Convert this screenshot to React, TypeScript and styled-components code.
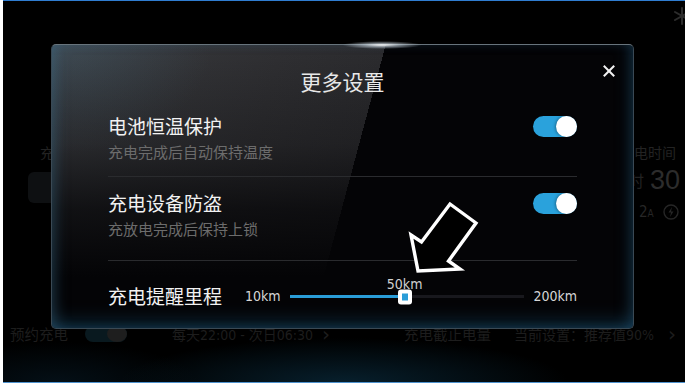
import styled, { createGlobalStyle } from "styled-components"

const CJK = `"Noto Sans CJK SC", "Noto Sans", sans-serif`
const NUM = `"DejaVu Sans Condensed", "Liberation Sans Narrow", "Noto Sans CJK SC", sans-serif`

const GlobalStyle = createGlobalStyle`
  html, body {
    margin: 0;
    padding: 0;
    background: #fff;
  }
  body {
    font-family: ${CJK};
  }
  * {
    box-sizing: border-box;
  }
`

const Toggle = ({ on, dim }: { on: boolean; dim?: boolean }) => (
  <Track $on={on} $dim={dim}>
    <Knob $on={on} $dim={dim} />
  </Track>
)

const Setting = ({
  title,
  note,
  top,
  bottom,
}: {
  title: string
  note: string
  top: number
  bottom: number
}) => (
  <Item $top={top} $bottom={bottom}>
    <ItemHead>
      <ItemTitle>{title}</ItemTitle>
      <Toggle on />
    </ItemHead>
    <ItemNote>{note}</ItemNote>
  </Item>
)

export default function App() {
  const percent = 49
  return (
    <>
      <GlobalStyle />
      <Screen>
        <Page>
          <TopBar>
            <svg width="16" height="18" viewBox="0 0 16 18">
              <g stroke="#2c2c2c" strokeWidth="2" strokeLinecap="round">
                <line x1="8" y1="1" x2="8" y2="17" />
                <line x1="1" y1="5" x2="15" y2="13" />
                <line x1="1" y1="13" x2="15" y2="5" />
              </g>
            </svg>
          </TopBar>
          <Middle>
            <LeftCol>
              <DimLabel>充电功率</DimLabel>
              <DimBox />
            </LeftCol>
            <RightCol>
              <DimLabel>充电时间</DimLabel>
              <BigRow>
                <DimSmall>时</DimSmall>
                <BigNum>30</BigNum>
              </BigRow>
              <AmpRow>
                <Amp>
                  2<small>A</small>
                </Amp>
                <svg width="16" height="16" viewBox="0 0 16 16">
                  <circle cx="8" cy="8" r="7" fill="none" stroke="#262626" strokeWidth="1.4" />
                  <path d="M9 3 L5.5 8.6 H8 L7 13 L10.5 7.4 H8 Z" fill="#262626" />
                </svg>
              </AmpRow>
            </RightCol>
          </Middle>
          <BottomRow>
            <BottomHalf $pad={7}>
              <Cell $w={75}>预约充电</Cell>
              <Toggle on={false} dim />
              <Cell $w={150} $num $left={45}>
                每天22:00 - 次日06:30
              </Cell>
              <Chevron>›</Chevron>
            </BottomHalf>
            <BottomHalf $pad={0}>
              <Cell $w={110}>充电截止电量</Cell>
              <Cell $w={154} $num>
                当前设置：推荐值90%
              </Cell>
              <Chevron>›</Chevron>
            </BottomHalf>
          </BottomRow>
        </Page>

        <Modal>
          <Glare />
          <Close>
            <svg width="12" height="12" viewBox="0 0 12 12">
              <g stroke="#f2f2f2" strokeWidth="2" strokeLinecap="square">
                <line x1="1.5" y1="1.5" x2="10.5" y2="10.5" />
                <line x1="10.5" y1="1.5" x2="1.5" y2="10.5" />
              </g>
            </svg>
          </Close>
          <Header>更多设置</Header>
          <Setting title="电池恒温保护" note="充电完成后自动保持温度" top={9} bottom={14} />
          <Setting title="充电设备防盗" note="充放电完成后保持上锁" top={14} bottom={21} />
          <SliderRow>
            <ItemTitle>充电提醒里程</ItemTitle>
            <RangeText $left={23}>10km</RangeText>
            <Rail>
              <Fill style={{ width: `${percent}%` }} />
              <Thumb style={{ left: `${percent}%` }}>
                <ThumbValue>50km</ThumbValue>
              </Thumb>
            </Rail>
            <RangeText $left={0}>200km</RangeText>
          </SliderRow>
        </Modal>

        <Pointer width="90" height="85" viewBox="0 0 90 85">
          <polygon
            points="18,76 11,40 21.5,47 50,9 76,28 48.5,66 60,74"
            fill="#000"
            stroke="#fff"
            strokeWidth="3.4"
            strokeLinejoin="miter"
          />
        </Pointer>
      </Screen>
    </>
  )
}

const Screen = styled.div`
  position: relative;
  margin-left: 3px;
  width: 682px;
  height: 383px;
  border-top: 1px solid #2f7dd1;
  border-bottom: 1px solid #4f93cf;
  background:
    radial-gradient(ellipse 280px 55px at 50% 100%, rgba(14, 62, 88, 0.5), transparent 80%),
    radial-gradient(ellipse 140px 40px at 8% 100%, rgba(10, 38, 56, 0.4), transparent),
    #000;
  overflow: hidden;
`
const Page = styled.div`
  height: 100%;
  display: flex;
  flex-direction: column;
`
const TopBar = styled.div`
  height: 30px;
  display: flex;
  justify-content: flex-end;
  align-items: center;
  margin-right: -5px;
`
const Middle = styled.div`
  margin-top: 112px;
  display: grid;
  grid-template-columns: 1fr 65px;
`
const LeftCol = styled.div`
  padding-left: 37px;
  display: flex;
  flex-direction: column;
`
const RightCol = styled.div`
  white-space: nowrap;
  display: flex;
  flex-direction: column;
`
const DimLabel = styled.div`
  font-size: 14px;
  line-height: 18px;
  color: #232323;
  white-space: nowrap;
`
const DimBox = styled.div`
  margin: 11px 0 0 -12px;
  width: 120px;
  height: 31px;
  border-radius: 6px;
  background: #0e1012;
`
const BigRow = styled.div`
  margin-top: 5px;
  height: 28px;
  display: flex;
  align-items: center;
  padding-left: 8px;
`
const DimSmall = styled.span`
  font-size: 16px;
  color: #222;
`
const BigNum = styled.span`
  margin-left: 6px;
  font-family: "Liberation Sans", "DejaVu Sans", sans-serif;
  font-size: 27px;
  color: #2c2c2c;
`
const AmpRow = styled.div`
  margin-top: 9px;
  display: flex;
  align-items: center;
  gap: 9px;
  padding-left: 19px;
`
const Amp = styled.span`
  font-family: ${NUM};
  font-size: 15px;
  color: #262626;
  small {
    font-size: 10px;
  }
`
const BottomRow = styled.div`
  margin-top: auto;
  margin-bottom: 39px;
  height: 20px;
  display: grid;
  grid-template-columns: 401px 1fr;
`
const BottomHalf = styled.div<{ $pad: number }>`
  display: flex;
  align-items: center;
  padding-left: ${(p) => p.$pad}px;
`
const Cell = styled.div<{ $w: number; $num?: boolean; $left?: number }>`
  width: ${(p) => p.$w}px;
  margin-left: ${(p) => p.$left ?? 0}px;
  font-family: ${(p) => (p.$num ? NUM : CJK)};
  font-size: ${(p) => (p.$num ? 14 : 14.5)}px;
  color: #1d1d1d;
  white-space: nowrap;
`
const Chevron = styled.span`
  font-family: "DejaVu Sans", sans-serif;
  font-size: 20px;
  line-height: 20px;
  color: #1d1d1d;
`
const Track = styled.div<{ $on: boolean; $dim?: boolean }>`
  flex: none;
  width: ${(p) => (p.$dim ? 42 : 44)}px;
  height: ${(p) => (p.$dim ? 16 : 21)}px;
  border-radius: 11px;
  background: ${(p) => (p.$dim ? "#09191f" : "#2aa2dc")};
  display: flex;
  justify-content: ${(p) => (p.$on ? "flex-end" : "flex-end")};
`
const Knob = styled.div<{ $on: boolean; $dim?: boolean }>`
  width: ${(p) => (p.$dim ? 20 : 21)}px;
  height: ${(p) => (p.$dim ? 16 : 21)}px;
  border-radius: 50%;
  background: ${(p) => (p.$dim ? "#1e1e1e" : "#fff")};
  box-shadow: ${(p) => (p.$dim ? "none" : "-1px 0 3px rgba(0, 0, 0, 0.35)")};
`

const Modal = styled.div`
  position: absolute;
  left: 48px;
  top: 43px;
  width: 583px;
  height: 285px;
  padding: 0 56px;
  border: 1px solid #3a4954;
  border-top-color: #68747c;
  border-radius: 5px;
  background:
    linear-gradient(
      to bottom,
      rgba(4, 4, 6, 0) 0%,
      rgba(4, 4, 6, 0.3) 35%,
      rgba(4, 4, 6, 0.75) 58%,
      #040406 82%
    ),
    radial-gradient(ellipse 160px 110px at 0% 0%, rgba(70, 96, 112, 0.45), transparent),
    linear-gradient(105deg, #3a3c40 0%, #303033 35%, #2c2c2f 50.8%, #040406 50.8%);
  box-shadow:
    inset 10px 0 16px -8px rgba(70, 120, 150, 0.4),
    inset -10px 0 16px -8px rgba(40, 100, 140, 0.4),
    inset 0 -14px 20px -10px rgba(30, 100, 140, 0.5);
`
const Glare = styled.div`
  position: absolute;
  left: 290px;
  top: -4px;
  width: 80px;
  height: 8px;
  background: radial-gradient(
    ellipse at center,
    rgba(255, 255, 255, 0.95) 0%,
    rgba(215, 228, 238, 0.55) 30%,
    transparent 70%
  );
  pointer-events: none;
`
const Close = styled.div`
  position: absolute;
  top: 20px;
  right: 18px;
  width: 12px;
  height: 12px;
  display: flex;
`
const Header = styled.div`
  height: 60px;
  padding-top: 24px;
  line-height: 24px;
  font-size: 21px;
  color: #e8e8e8;
  text-align: center;
`
const Item = styled.div<{ $top: number; $bottom: number }>`
  padding: ${(p) => p.$top}px 0 ${(p) => p.$bottom}px;
  border-bottom: 1px solid #2a2b2e;
`
const ItemHead = styled.div`
  display: flex;
  justify-content: space-between;
  align-items: center;
  height: 24px;
`
const ItemTitle = styled.div`
  font-size: 19px;
  line-height: 24px;
  color: #f2f2f2;
  white-space: nowrap;
`
const ItemNote = styled.div`
  margin-top: 4px;
  font-size: 15px;
  line-height: 20px;
  color: #6c6c6c;
`
const SliderRow = styled.div`
  margin-top: 24px;
  height: 22px;
  display: flex;
  align-items: center;
`
const RangeText = styled.span<{ $left: number }>`
  margin-left: ${(p) => p.$left}px;
  font-family: ${NUM};
  font-size: 14px;
  color: #d6d6d6;
`
const Rail = styled.div`
  position: relative;
  flex: 1;
  height: 3px;
  margin: 1px 9px 0 9px;
  background: #18181d;
`
const Fill = styled.div`
  height: 100%;
  background: #2a9dd8;
`
const Thumb = styled.div`
  position: absolute;
  top: 50%;
  width: 14px;
  height: 15px;
  transform: translate(-50%, -50%);
  border-radius: 3px;
  background: #fff;
  display: flex;
  align-items: center;
  justify-content: center;
  &::before {
    content: "";
    width: 6px;
    height: 7px;
    background: #2a9dd8;
  }
`
const ThumbValue = styled.span`
  position: absolute;
  bottom: 100%;
  left: 50%;
  transform: translateX(-50%);
  margin-bottom: -2px;
  font-family: ${NUM};
  font-size: 14px;
  line-height: 16px;
  color: #d0d0d0;
`
const Pointer = styled.svg`
  position: absolute;
  left: 397px;
  top: 194px;
`
